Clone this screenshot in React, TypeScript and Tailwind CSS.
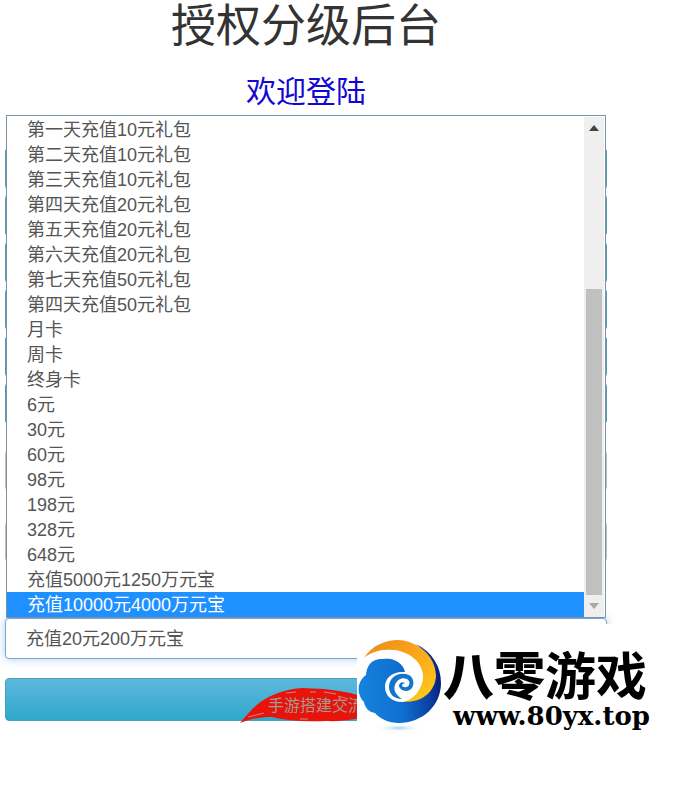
const OPTIONS = [
  "第一天充值10元礼包",
  "第二天充值10元礼包",
  "第三天充值10元礼包",
  "第四天充值20元礼包",
  "第五天充值20元礼包",
  "第六天充值20元礼包",
  "第七天充值50元礼包",
  "第四天充值50元礼包",
  "月卡",
  "周卡",
  "终身卡",
  "6元",
  "30元",
  "60元",
  "98元",
  "198元",
  "328元",
  "648元",
  "充值5000元1250万元宝",
  "充值10000元4000万元宝",
];

const ACTIVE = "充值10000元4000万元宝";
const CURRENT = "充值20元200万元宝";

function OptionList() {
  return (
    <div className="absolute inset-x-px top-0 flex border border-[#7c93a3] bg-white pt-px">
      <ul role="listbox" aria-label="礼包" className="flex-1 text-lg leading-[27px] text-[#555]">
        {OPTIONS.map((label, i) => (
          <li
            key={i}
            role="option"
            aria-selected={label === ACTIVE}
            className={label === ACTIVE ? "h-[25px] bg-[#1e90ff] pl-5 text-white" : "h-[25px] pl-5"}
          >
            {label}
          </li>
        ))}
      </ul>
      <div className="mr-px flex w-5 flex-col items-center bg-[#efefef]">
        <svg viewBox="0 0 10 6" className="mt-2 h-1.5 w-2.5" fill="#444">
          <path d="M5 0 10 6H0z" />
        </svg>
        <div className="mt-[158px] w-4 flex-1 bg-[#c0c0c0]" />
        <svg viewBox="0 0 10 6" className="my-2 h-1.5 w-2.5" fill="#a8a8a8">
          <path d="M0 0h10L5 6z" />
        </svg>
      </div>
    </div>
  );
}

// rows that the open list lies over
function HiddenRows() {
  return (
    <div className="flex flex-col gap-1.5 pt-[33px]">
      {[0, 1, 2, 3, 4, 5].map((i) => (
        <div key={i} className="h-[41px] rounded-sm bg-[#5598b3]" />
      ))}
      <div className="mt-5 h-[41px] rounded border border-[#bbb]" />
      <div className="mt-6 h-[41px] rounded border border-[#bbb]" />
    </div>
  );
}

function Swirl() {
  return (
    <svg viewBox="5 0 86 108" className="h-[108px] w-[86px] shrink-0">
      <defs>
        <linearGradient id="gold" x1="0" y1="0" x2="1" y2="1">
          <stop offset="0" stopColor="#e98a1c" />
          <stop offset="0.4" stopColor="#f9a11a" />
          <stop offset="1" stopColor="#ffd01c" />
        </linearGradient>
        <linearGradient id="navy" x1="0" y1="0.5" x2="1" y2="0.4">
          <stop offset="0" stopColor="#1583dc" />
          <stop offset="0.5" stopColor="#0f6fd0" />
          <stop offset="0.85" stopColor="#0a3d9e" />
          <stop offset="1" stopColor="#0a1a78" />
        </linearGradient>
        <radialGradient id="shade">
          <stop offset="0" stopColor="#8ec4e8" stopOpacity="0.8" />
          <stop offset="1" stopColor="#fff" stopOpacity="0" />
        </radialGradient>
      </defs>
      <ellipse cx="47" cy="96" rx="24" ry="4" fill="url(#shade)" />
      <path d="M64 12C80 20 89 34 89 51C89 74 70 91 47 91C37 91 28 87 23 81C17 80 13 76 12 70C5 64 4 50 14 43C14 33 21 26 30 27C42 24 52 31 54 40L60 66C84 54 84 28 64 12Z" fill="url(#navy)" />
      <path d="M12 26C20 13 34 8 46 8C67 9 84 25 84 44C83 62 66 73 47 69C60 68 71 57 71 44C70 28 53 17 36 18C26 18 18 21 12 26Z" fill="url(#gold)" />
      <path d="M12 26C20 20 30 17 40 18C58 19 71 31 71 45C70 59 60 69 50 70C39 70 33 63 33 55C33 46 40 39 53 40C51 31 41 25 30 27C21 26 14 33 14 43C12 37 12 31 16 26Z" fill="#fff" />
      <path d="M57 43C46 39 37 46 37 55C37 62 42 67 50 67C44 63 41 58 43 53C45 46 54 44 57 49C59 54 54 57 50 54C50 52 51 51 53 52C52 49 47 50 47 54C48 59 56 61 60 56C63 51 61 45 57 43Z" fill="#1277cc" />
    </svg>
  );
}

function Watermark() {
  return (
    <div className="absolute right-0 bottom-0 flex w-80 bg-white pt-2">
      <Swirl />
      <div className="pt-[26px] text-black">
        <p className="text-[51px] leading-10 font-black whitespace-nowrap">
          八零<span className="font-bold">游戏</span>
        </p>
        <p className="pl-2.5 font-['DejaVu_Serif'] text-[26px] leading-9 font-bold">www.80yx.top</p>
      </div>
    </div>
  );
}

export default function App() {
  return (
    <div className="relative bg-white font-['Liberation_Sans','Noto_Sans_CJK_SC',sans-serif]">
      <form className="mr-[70px] ml-[5px] pb-[19px]">
        <h1 className="text-center text-[45px] leading-[54px] text-[#333]">授权分级后台</h1>
        <h2 className="pt-[18px] pb-[3px] text-center text-3xl leading-10 text-[#1208d0]">欢迎登陆</h2>
        <div className="relative h-[503px]">
          <HiddenRows />
          <OptionList />
        </div>
        <select
          aria-label="充值"
          className="block h-[41px] w-full appearance-none rounded border border-[#7fa3cf] bg-white pl-5 text-lg text-[#555] shadow-[0_0_8px_rgba(82,168,236,0.5)]"
        >
          <option>{CURRENT}</option>
        </select>
        <button
          type="button"
          className="relative mt-[19px] block h-[43px] w-full rounded border border-[#4a9fba] bg-linear-to-b from-[#5bb8dc] to-[#2da8cc]"
        >
          <svg viewBox="0 0 150 36" className="absolute top-[9px] left-[234px] h-9 w-[150px]" fill="#e8140c">
            <path d="M0 35C8 26 14 18 22 13C34 5 48 1 62 0L84 1C106 3 128 8 150 20C130 30 104 34 86 33C66 34 48 33 32 29C20 29 10 31 0 35Z" />
            <path d="M8 29L24 25M46 5l10-1M70 4h6M84 4l12 2M60 31h8M98 8l10 3" fill="none" stroke="#c98a80" strokeWidth="1" />
          </svg>
          <span className="absolute top-[13px] left-[262px] text-base leading-7 text-[#a39a90]">手游搭建交流</span>
        </button>
      </form>
      <Watermark />
    </div>
  );
}
